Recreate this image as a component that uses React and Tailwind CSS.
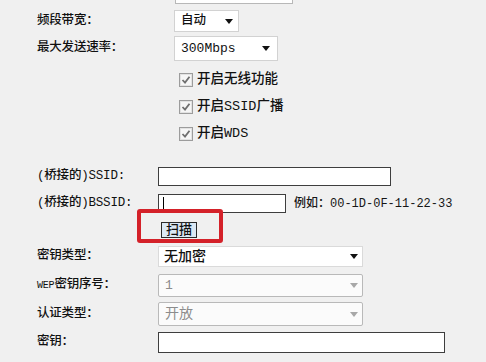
import React from "react";

const FONT = { fontFamily: '"Liberation Mono", "Noto Sans CJK SC", monospace' };

function Arrow({ color = "#111" }) {
  return (
    <svg width="8" height="5" viewBox="0 0 8 5" className="shrink-0">
      <polygon points="0,0 8,0 4,5" fill={color} />
    </svg>
  );
}

function Check() {
  return (
    <svg width="14" height="14" viewBox="0 0 14 14" className="shrink-0">
      <rect x="0.5" y="0.5" width="13" height="13" fill="#f6f6f6" stroke="#9c9c9c" />
      <rect x="1.5" y="1.5" width="11" height="11" fill="none" stroke="#e2e2e2" />
      <path d="M3.5 7 L6 9.6 L10.5 3.8" fill="none" stroke="#6f6f6f" strokeWidth="1.8" />
    </svg>
  );
}

function Label({ children, w }) {
  return (
    <div className={`${w} shrink-0 text-[12.5px] font-medium text-[#111] leading-none tracking-[-0.2px]`}>{children}</div>
  );
}

export default function App() {
  return (
    <div className="w-[486px] h-[362px] bg-[#f0f0f0] overflow-hidden flex flex-col" style={FONT}>
      {/* top stub */}
      <div className="h-[4px] pl-[175px] flex">
        <div className="w-[118px] h-[4px] bg-white border-x border-b border-[#b8b8b8]" />
      </div>

      {/* 频段带宽 */}
      <div className="mt-[6px] h-[22px] pl-[37px] flex items-center">
        <Label w="w-[137px]">频段带宽：</Label>
        <div className="w-[65px] h-[22px] bg-white border border-[#d2d2d2] flex items-center justify-between pl-[6px] pr-[5px]">
          <span className="text-[12.5px] font-medium text-[#111]">自动</span>
          <Arrow />
        </div>
      </div>

      {/* 最大发送速率 */}
      <div className="mt-[4px] h-[25px] pl-[37px] flex items-center">
        <Label w="w-[137px]">最大发送速率：</Label>
        <div className="w-[104px] h-[25px] bg-white border border-[#d2d2d2] flex items-center justify-between pl-[6px] pr-[7px]">
          <span className="text-[13px] text-[#111]">300Mbps</span>
          <Arrow />
        </div>
      </div>

      {/* checkboxes */}
      <div className="mt-[5px] flex flex-col pl-[179px]">
        {["开启无线功能", "开启SSID广播", "开启WDS"].map((t) => (
          <div key={t} className="h-[27px] flex items-center gap-[4px]">
            <Check />
            <span className="text-[13.5px] font-medium text-[#111] leading-none">{t}</span>
          </div>
        ))}
      </div>

      {/* SSID */}
      <div className="mt-[20px] h-[19px] pl-[37px] flex items-center">
        <Label w="w-[121px]">(桥接的)SSID:</Label>
        <div className="w-[233px] h-[19px] bg-white border border-[#3e3e3e]" />
      </div>

      {/* BSSID */}
      <div className="mt-[8px] h-[19px] pl-[37px] flex items-center">
        <Label w="w-[121px]">(桥接的)BSSID:</Label>
        <div className="w-[128px] h-[19px] bg-white border border-[#3e3e3e] flex items-center pl-[4px]">
          <div className="w-px h-[13px] bg-black" />
        </div>
        <span className="ml-[8px] text-[12px] font-medium text-[#161616] leading-none">例如：00-1D-0F-11-22-33</span>
      </div>

      {/* scan */}
      <div className="mt-[9px] h-[16px] pl-[161px] flex">
        <div className="relative">
          <div className="absolute left-[-24px] right-[-26px] top-[-13px] bottom-[-5px] border-[4px] border-[#d42129] rounded-[3px]" />
          <div className="relative w-[36px] h-[16px] bg-[#dbe8f4] border border-[#2a2a2a] flex items-center justify-center text-[13px] font-medium text-[#111] leading-none">
            扫描
          </div>
        </div>
      </div>

      {/* 密钥类型 */}
      <div className="mt-[8px] h-[21px] pl-[37px] flex items-center">
        <Label w="w-[121px]">密钥类型：</Label>
        <div className="w-[205px] h-[21px] bg-white border border-[#dadada] flex items-center justify-between pl-[5px] pr-[4px]">
          <span className="text-[14px] font-medium text-[#111] leading-none">无加密</span>
          <Arrow />
        </div>
      </div>

      {/* WEP */}
      <div className="mt-[7px] h-[23px] pl-[37px] flex items-center">
        <Label w="w-[121px]"><span className="text-[10px]">WEP</span>密钥序号：</Label>
        <div className="w-[205px] h-[23px] bg-[#fbfbfb] border border-[#b9b9b9] rounded-[2px] flex items-center justify-between pl-[6px] pr-[4px]">
          <span className="text-[13px] text-[#8c8c8c] leading-none">1</span>
          <Arrow color="#a8a8a8" />
        </div>
      </div>

      {/* 认证类型 */}
      <div className="mt-[5px] h-[24px] pl-[37px] flex items-center">
        <Label w="w-[121px]">认证类型：</Label>
        <div className="w-[205px] h-[24px] bg-[#fbfbfb] border border-[#b9b9b9] rounded-[2px] flex items-center justify-between pl-[6px] pr-[4px]">
          <span className="text-[14px] text-[#8c8c8c] leading-none">开放</span>
          <Arrow color="#a8a8a8" />
        </div>
      </div>

      {/* 密钥 */}
      <div className="mt-[6px] h-[21px] pl-[37px] flex items-center">
        <Label w="w-[121px]">密钥：</Label>
        <div className="w-[287px] h-[21px] bg-white border border-[#3e3e3e]" />
      </div>
    </div>
  );
}
